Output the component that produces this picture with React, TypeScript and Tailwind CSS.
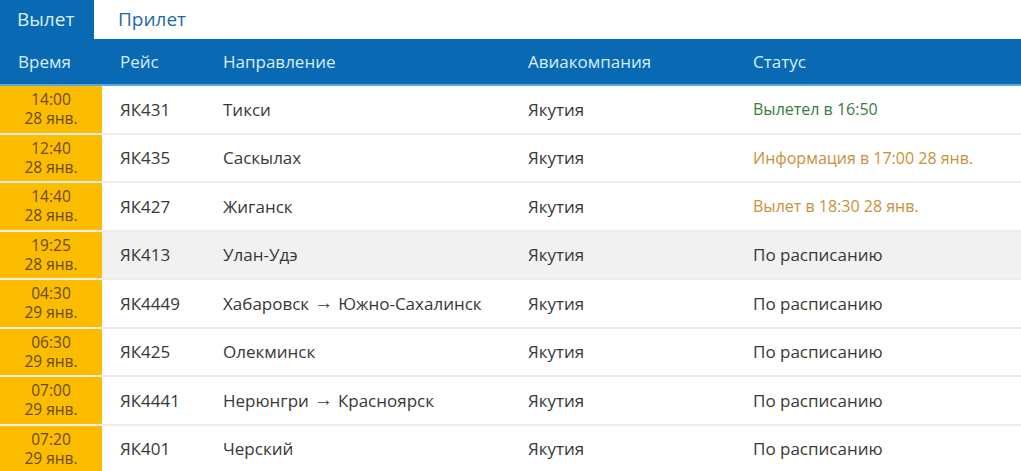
import React from 'react';

type Flight = {
  time: string;
  date: string;
  flight: string;
  direction: string[];
  airline: string;
  status: string;
  tone?: 'green' | 'orange';
};

const flights: Flight[] = [
  { time: '14:00', date: '28 янв.', flight: 'ЯК431', direction: ['Тикси'], airline: 'Якутия', status: 'Вылетел в 16:50', tone: 'green' },
  { time: '12:40', date: '28 янв.', flight: 'ЯК435', direction: ['Саскылах'], airline: 'Якутия', status: 'Информация в 17:00 28 янв.', tone: 'orange' },
  { time: '14:40', date: '28 янв.', flight: 'ЯК427', direction: ['Жиганск'], airline: 'Якутия', status: 'Вылет в 18:30 28 янв.', tone: 'orange' },
  { time: '19:25', date: '28 янв.', flight: 'ЯК413', direction: ['Улан-Удэ'], airline: 'Якутия', status: 'По расписанию' },
  { time: '04:30', date: '29 янв.', flight: 'ЯК4449', direction: ['Хабаровск', 'Южно-Сахалинск'], airline: 'Якутия', status: 'По расписанию' },
  { time: '06:30', date: '29 янв.', flight: 'ЯК425', direction: ['Олекминск'], airline: 'Якутия', status: 'По расписанию' },
  { time: '07:00', date: '29 янв.', flight: 'ЯК4441', direction: ['Нерюнгри', 'Красноярск'], airline: 'Якутия', status: 'По расписанию' },
  { time: '07:20', date: '29 янв.', flight: 'ЯК401', direction: ['Черский'], airline: 'Якутия', status: 'По расписанию' },
];

const cols = 'grid grid-cols-[102px_103px_305px_225px_1fr]';

const App: React.FC = () => {
  return (
    <div className="w-[1021px] h-[471px] overflow-hidden bg-white font-['Open_Sans',sans-serif] text-[17px] text-[#383838]">
      {/* tabs */}
      <div className="flex h-[39px] bg-white">
        <div className="w-[94px] bg-[#0a69b3] text-[#d9efff] flex items-center pl-[17px] text-[19px]">Вылет</div>
        <div className="text-[#1f6aa8] flex items-center pl-[24px] text-[19px]">Прилет</div>
      </div>

      {/* header */}
      <div className={`${cols} h-[47px] bg-[#0a69b3] text-[#d6efff] items-center border-b-2 border-[#5aa9dc]`}>
        <div className="pl-[18px]">Время</div>
        <div className="pl-[18px]">Рейс</div>
        <div className="pl-[18px]">Направление</div>
        <div className="pl-[18px]">Авиакомпания</div>
        <div className="pl-[18px]">Статус</div>
      </div>

      {flights.map((f, i) => (
        <div
          key={f.flight}
          className={`${cols} h-[48.5px] items-stretch border-b-2 border-[#ececec] ${i === 3 ? 'bg-[#f1f1f1]' : 'bg-white'}`}
        >
          <div className="bg-[#fcbc00] flex flex-col items-center justify-center text-[#6b4a0e] text-[15.5px] leading-[19px]">
            <span>{f.time}</span>
            <span>{f.date}</span>
          </div>
          <div className="pl-[18px] flex items-center">{f.flight}</div>
          <div className="pl-[18px] flex items-center whitespace-nowrap">
            {f.direction.map((d, j) => (
              <React.Fragment key={d}>
                {j > 0 && <span className="font-['Liberation_Sans',sans-serif] text-[19px] mx-[5px]">→</span>}
                {d}
              </React.Fragment>
            ))}
          </div>
          <div className="pl-[18px] flex items-center">{f.airline}</div>
          <div
            className={`pl-[18px] flex items-center ${
              f.tone === 'green' ? 'text-[#3d7a3d] text-[16px]' : f.tone === 'orange' ? 'text-[#c8913a] text-[16px]' : ''
            }`}
          >
            {f.status}
          </div>
        </div>
      ))}
    </div>
  );
};

export default App;
